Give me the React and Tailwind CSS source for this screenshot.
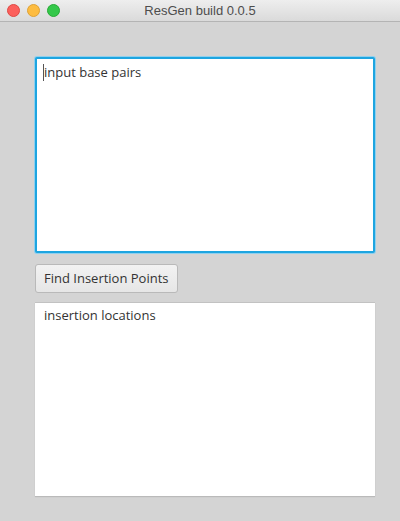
export default function App() {
  return (
    <div className="w-[400px] h-[521px] bg-[#d4d4d4] flex flex-col overflow-hidden" style={{ fontFamily: '"Open Sans", sans-serif' }}>
      <div className="h-[22px] shrink-0 bg-gradient-to-b from-[#eeeeee] to-[#dadada] border-b border-[#b4b4b4] relative flex items-center">
        <div className="flex gap-[7px] pl-[7px]">
          <div className="w-[13px] h-[13px] rounded-full bg-[#fc605c] border border-[#de4a45]" />
          <div className="w-[13px] h-[13px] rounded-full bg-[#fdbc40] border border-[#dea236]" />
          <div className="w-[13px] h-[13px] rounded-full bg-[#34c84a] border border-[#27aa35]" />
        </div>
        <div className="absolute inset-0 flex items-center justify-center text-[13px] text-[#4d4d4d]" style={{ fontFamily: '"Liberation Sans", sans-serif' }}>
          ResGen build 0.0.5
        </div>
      </div>
      <div className="flex flex-col pl-[35px] pr-[25px] pt-[35px]">
        <div className="h-[196px] bg-white border-2 border-[#1ea5e0] shadow-[0_0_0_1px_#8fd0ee] rounded-[2px] px-[6px] pt-[4px] text-[13px] text-[#333] flex items-start">
          <span className="w-px h-[17px] bg-[#555] mt-[1px]" />
          <span>input base pairs</span>
        </div>
        <div className="mt-[11px]">
          <div className="inline-flex items-center h-[29px] px-[8px] bg-gradient-to-b from-[#f2f2f2] to-[#e6e6e6] border border-[#b9b9b9] rounded-[3px] text-[13px] text-[#333]">
            Find Insertion Points
          </div>
        </div>
        <div className="mt-[9px] h-[194px] bg-white border-t border-[#c2c2c2] shadow-[0_1px_1px_rgba(0,0,0,0.12)] px-[9px] pt-[3px] text-[13px] text-[#333]">
          insertion locations
        </div>
      </div>
    </div>
  );
}
